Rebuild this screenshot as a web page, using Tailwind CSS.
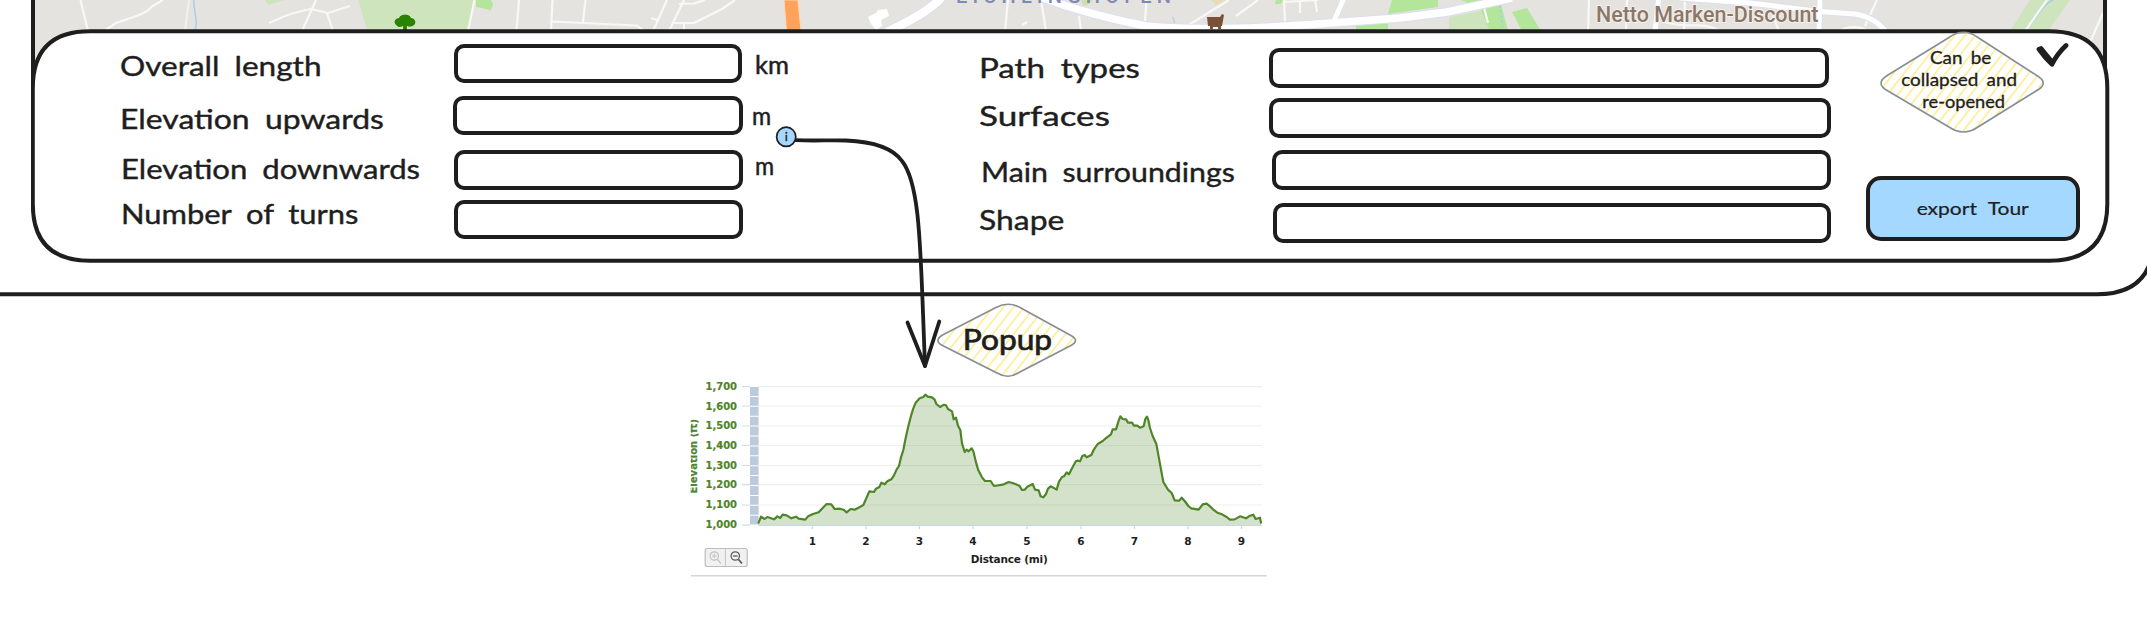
<!DOCTYPE html>
<html lang="en">
<head>
<meta charset="utf-8">
<title>Tour details</title>
<script src="https://cdn.jsdelivr.net/npm/@tailwindcss/browser@4"></script>
</head>
<body class="bg-white">
<main class="relative flex h-[623px] w-[2147px] flex-col overflow-hidden bg-white font-['Lato',sans-serif] text-[#1e1e1e]">

  <!-- map strip, continues under the rounded panel corners -->
  <div class="ml-[31px] h-[90px] w-[2076px] shrink-0 border-x-4 border-[#1e1e1e] bg-[#e5e3df]">
    <svg class="block h-[90px] w-[2068px]" viewBox="35 0 2068 90" fill="none">
      <g fill="#cde4bd">
        <path d="M265 0H284L268 5Z"/>
        <path d="M358 0H474.500L468 31H367.500Z"/>
        <path d="M1449 17L1485 10L1494 31H1449Z"/>
        <path d="M2030 0H2070L2048 31H2010Z"/>
      </g>
      <g fill="#b3e59a">
        <path d="M476 0H491L493 4L491 10.500L484 8.500L476 7Z"/>
        <path d="M1276 0H1283L1281 4H1275Z"/>
        <path d="M1392 0H1438V7L1388 14Z"/>
        <path d="M1356 25L1388 23V31H1356Z"/>
        <path d="M1461 0H1500L1508 31H1490L1480 8Z"/>
        <path d="M1512 12L1527 8L1541 31H1522Z"/>
        <path d="M1081 0H1093L1088 5L1083 6Z" fill="#cfe0ae"/>
      </g>
      <path d="M1211 0H1225L1216 5Z" fill="#e8dcb4"/>
      <g stroke="#a9cdea" stroke-width="1.500">
        <path d="M194 0C193 12 199 20 195 31"/>
        <path d="M1499 0L1503 31" stroke-dasharray="3 2"/>
        <path d="M2053 0C2040 6 2042 14 2026 28"/>
        <path d="M1173 17L1175 25" stroke="#c6cde8"/>
      </g>
      <g stroke="#f8f8f6" stroke-width="2.200" stroke-linejoin="round">
        <path d="M80.500 0L88 31M104 31L116 23C130 18 147 14 151 7L163 0"/>
        <path d="M189 0L185 31" stroke-opacity=".6"/>
        <path d="M269 23L276 20C290 13 300 11 311 9L328 13L350 6M316 0L302 31M327 13L333 31"/>
        <path d="M474.500 0L468 31M519 0L516.500 31M552.500 0L551 31M551 21.500L637 25.500L644 31M585.500 0L583 22M566 -1H601"/>
        <path d="M667 0L653 31M684 0L669 31M679 4L694 3.500L705 0M673 23H694L722 9L735 0M684 23V31M651 18L657 20"/>
        <path d="M1008 0L1005 31M1041 0L1046 31M1079 16L1081 31M1146.500 0L1145 21M1187 26L1229 0M1236 16L1258 0M1022 25L1027 22"/>
        <path d="M1284 0L1285 21M1284 2L1318 0M1300 0V13M1315 0L1317 12"/>
        <path d="M1482 0L1488 23M1589 0L1588 31M1627 0L1626 31M1685 0L1684 31M1773 16L1779 31M1877 0L1865 26M2047 0L2025 31M2103 13L2083 58"/>
        <path d="M1665 22C1690 30 1700 20 1720 31M1840 31C1846 26 1860 26 1866 30"/>
      </g>
      <g stroke="#dcdff0" stroke-linejoin="round">
        <path d="M942 -3C930 10 912 20 887 32" stroke-width="10.500"/>
        <path d="M1040 -3C1070 8 1100 17 1146 26C1200 31 1260 28 1303 25L1400 18L1447 12L1512 -2" stroke-width="9.500"/>
        <path d="M1344 -2L1334 21M1658.500 0L1655 31M1820 0L1819 31M1680 -2L1750 3L1820 11.500L1855 14C1872 17 1880 24 1888 34" stroke-width="7"/>
      </g>
      <g stroke="#fff" stroke-linejoin="round">
        <path d="M942 -3C930 10 912 20 887 32" stroke-width="8.500"/>
        <path d="M1040 -3C1070 8 1100 17 1146 26C1200 31 1260 28 1303 25L1400 18L1447 12L1512 -2" stroke-width="7.500"/>
        <path d="M1344 -2L1334 21M1658.500 0L1655 31M1820 0L1819 31M1680 -2L1750 3L1820 11.500L1855 14C1872 17 1880 24 1888 34" stroke-width="5"/>
      </g>
      <path d="M868 17L876 13L878 10L887 9L889 16L881 20L882 26L876 30L871 24Z" fill="#fff"/>
      <path d="M784 0H798L801 31H786.500Z" fill="#ffa35c" stroke="#fbd9bd"/>
      <!-- tree -->
      <path d="M396 25C393 22 395 18 399 18C400 14 409 13 411 18C415 18 417 23 414 25C412 27 409 27 407 26L407 31H403V26C400 28 398 27 396 25Z" fill="#2a8400" stroke="#e6f2dd" stroke-width="1" paint-order="stroke"/>
      <!-- cart -->
      <path d="M1207 17H1220L1222 14L1224 15L1222 26H1221V29H1218V27H1213V29H1210V26H1208Z" fill="#7a5138"/>
      <text x="956" y="3.300" textLength="215" font-family="Roboto, sans-serif" font-weight="500" font-size="20" fill="#7f88b3">EICHLINGHOFEN</text>
      <text x="1596" y="21.700" textLength="222.500" lengthAdjust="spacingAndGlyphs" font-family="Roboto, sans-serif" font-weight="500" font-size="22.500" fill="#8c7767" stroke="#f4f1ee" stroke-width="2" paint-order="stroke">Netto Marken-Discount</text>
    </svg>
  </div>

  <!-- collapsible details panel -->
  <section class="relative -mt-[61px] ml-[31px] flex h-[234px] w-[2079px] shrink-0 pl-[90px]">
    <svg class="absolute inset-0 h-full w-full" viewBox="31 29 2079 234">
      <path d="M90 31.300H2049Q2107.300 31.300 2107.300 88V204Q2107.300 260.700 2049 260.700H90Q32.800 260.700 32.800 204V88Q32.800 31.300 90 31.300Z" fill="#fff" stroke="#1e1e1e" stroke-width="4"/>
    </svg>

    <div class="relative -ml-px flex w-[332px] flex-col whitespace-nowrap text-[27px] leading-8 [word-spacing:6px] [-webkit-text-stroke:0.4px_#1e1e1e] *:origin-left">
      <div class="mt-[21px] scale-x-[1.168]">Overall length</div>
      <div class="mt-[20.600px] scale-x-[1.182]">Elevation upwards</div>
      <div class="mt-[18px] ml-px scale-x-[1.152]">Elevation downwards</div>
      <div class="mt-[13px] ml-px scale-x-[1.145]">Number of turns</div>
    </div>

    <div class="relative flex w-[291px] flex-col *:rounded-[10px] *:border-4 *:border-[#1e1e1e] *:bg-white">
      <div class="mt-[15px] ml-[2px] h-[39px] w-[288px]"></div>
      <div class="mt-[13px] ml-[1px] h-[39px] w-[290px]"></div>
      <div class="mt-[15px] ml-[2px] h-[40px] w-[289px]"></div>
      <div class="mt-[10px] ml-[2px] h-[39px] w-[289px]"></div>
    </div>

    <div class="relative flex w-[236px] flex-col text-[25px] leading-8 [-webkit-text-stroke:0.5px_#1e1e1e] *:origin-left">
      <div class="mt-[19.300px] ml-[12px] scale-x-[1.020]">km</div>
      <div class="mt-[18.700px] ml-[9px] scale-x-[0.930]">m</div>
      <div class="mt-[18px] ml-[12px] scale-x-[0.930]">m</div>
    </div>

    <div class="relative flex w-[290px] flex-col whitespace-nowrap text-[27px] leading-8 [word-spacing:6px] [-webkit-text-stroke:0.4px_#1e1e1e] *:origin-left">
      <div class="mt-[23px] scale-x-[1.225]">Path types</div>
      <div class="mt-4 scale-x-[1.300]">Surfaces</div>
      <div class="mt-[23.700px] ml-[2px] scale-x-[1.122]">Main surroundings</div>
      <div class="mt-4 scale-x-[1.180]">Shape</div>
    </div>

    <div class="relative flex w-[597px] flex-col *:h-10 *:rounded-[10px] *:border-4 *:border-[#1e1e1e] *:bg-white">
      <div class="mt-[19px] w-[560px]"></div>
      <div class="mt-[10px] w-[562px]"></div>
      <div class="mt-[12px] ml-[3px] w-[559px]"></div>
      <div class="mt-[13px] ml-[4px] w-[558px]"></div>
    </div>

    <div class="relative flex w-[214px] flex-col">
      <div class="flex h-[104px] pt-[2px] pl-[14px]">
        <div class="relative h-[102px] w-[165px] shrink-0">
          <svg class="absolute inset-0" width="165" height="102" viewBox="1880 31 165 102">
            <defs>
              <pattern id="hatch" width="8.200" height="8.200" patternUnits="userSpaceOnUse" patternTransform="rotate(38)">
                <path d="M4 0V8.200" stroke="#ffe97f" stroke-width="1.400"/>
              </pattern>
            </defs>
            <path d="M1949 37.500Q1963.500 27 1978 37.500L2036 75Q2050.500 83.300 2036 91L1978 127Q1963.500 137 1949 127L1888 91Q1874 83.300 1888 75Z" fill="url(#hatch)" stroke="#868e96" stroke-width="1.600"/>
          </svg>
          <div class="relative flex flex-col items-center pt-[15.500px] pr-[7px] text-center text-[17px] leading-[22.300px] whitespace-nowrap [word-spacing:3px] [-webkit-text-stroke:0.3px_#1e1e1e]">
            <div class="ml-[3px] scale-x-[1.110]">Can be</div>
            <div class="scale-x-[1.110]">collapsed and</div>
            <div class="ml-[9px] scale-x-[1.070]">re-opened</div>
          </div>
        </div>
        <svg class="mt-[9px] -ml-[11px] shrink-0" width="35" height="30" viewBox="2034 40 35 30" fill="none" stroke="#1e1e1e" stroke-width="4.800" stroke-linecap="round" stroke-linejoin="round">
          <path d="M2039 49.200Q2045 58 2052 64.300Q2057 54 2066 45.500M2041 48.500L2052 62"/>
        </svg>
      </div>
      <button class="mt-[43px] flex h-[65px] w-[214px] items-center justify-center rounded-[15px] border-4 border-[#1e1e1e] bg-[#a5d8ff] pt-[1px] text-[17.500px] [word-spacing:5px] [-webkit-text-stroke:0.2px_#1e1e1e]"><span class="scale-x-[1.200]">export Tour</span></button>
    </div>
  </section>

  <!-- popup annotation -->
  <div class="relative mt-[40px] ml-[937px] flex h-[75px] w-[140px] shrink-0 items-center justify-center">
    <svg class="absolute inset-0" width="140" height="75" viewBox="937 303 140 75">
      <path d="M996 307.500Q1008.300 301 1020 307.500L1070 335Q1081 340.500 1070 346L1018 373Q1008.300 379.500 997 373L942.500 345.500Q933.500 340.500 942.500 335Z" fill="url(#hatch)" stroke="#868e96" stroke-width="1.700"/>
    </svg>
    <span class="relative -mt-[3px] scale-x-[1.130] text-[28px] leading-8 [-webkit-text-stroke:0.7px_#1e1e1e]">Popup</span>
  </div>

  <!-- elevation profile -->
  <svg class="mt-[2px] ml-[690px] shrink-0" width="580" height="200" viewBox="690 380 580 200" fill="none" font-family="'DejaVu Sans', sans-serif" font-weight="700">
    <path d="M758 386.700H1262M758 406H1262M758 426H1262M758 445.500H1262M758 465.500H1262M758 484.700H1262M758 505H1262" stroke="#eeefee" stroke-width="1.200"/>
    <path d="M742 386.700H750M742 406H750M742 426H750M742 445.500H750M742 465.500H750M742 484.700H750M742 505H750M742 525.200H750" stroke="#cfdde6" stroke-width="1.200"/>
    <path d="M754.300 387V525" stroke="#bccbdb" stroke-width="8.600" stroke-dasharray="8.900 1"/>
    <g transform="translate(680 290) scale(.33333)" stroke-linejoin="round">
      <path fill="#4d8527" fill-opacity=".24" d="M236 705L236 698L243 680L254 687L262 681L282 688L292 679L301 684L308 674L320 676L334 685L348 680L356 686L376 689L384 679L399 672L416 667L428 654L440 642L454 643L464 657L480 656L492 660L500 667L512 657L524 659L538 652L550 645L558 627L568 604L582 606L588 596L598 591L604 578L614 583L622 574L634 568L642 556L650 538L657 528L663 502L670 480L677 444L686 404L694 374L700 355L707 338L719 325L730 321L736 314L743 320L756 322L764 329L769 342L780 351L792 344L798 346L804 357L816 364L821 388L828 383L834 407L841 420L846 460L854 486L860 479L866 484L875 475L880 484L888 517L895 541L906 562L915 573L932 573L942 588L968 584L986 576L1000 580L1018 587L1026 600L1034 599L1042 590L1058 582L1065 599L1076 601L1082 619L1090 622L1098 612L1104 596L1112 589L1120 593L1130 599L1137 575L1146 561L1152 559L1160 547L1167 553L1176 535L1188 513L1194 512L1200 514L1207 498L1214 495L1220 502L1234 495L1242 478L1253 462L1268 453L1280 443L1293 433L1298 418L1308 418L1316 392L1321 379L1328 387L1338 388L1344 398L1356 398L1362 407L1372 407L1380 413L1391 409L1396 387L1401 380L1405 390L1410 414L1418 438L1429 462L1436 500L1445 549L1450 576L1464 599L1475 609L1484 631L1498 632L1505 623L1514 633L1525 648L1534 655L1556 659L1568 643L1580 641L1590 649L1600 659L1612 668L1626 673L1640 681L1650 689L1664 688L1680 679L1698 685L1710 677L1720 674L1727 687L1740 683L1743 698V705Z"/>
      <path stroke="#4d8527" stroke-width="6.500" stroke-linecap="round" d="M236 698L243 680L254 687L262 681L282 688L292 679L301 684L308 674L320 676L334 685L348 680L356 686L376 689L384 679L399 672L416 667L428 654L440 642L454 643L464 657L480 656L492 660L500 667L512 657L524 659L538 652L550 645L558 627L568 604L582 606L588 596L598 591L604 578L614 583L622 574L634 568L642 556L650 538L657 528L663 502L670 480L677 444L686 404L694 374L700 355L707 338L719 325L730 321L736 314L743 320L756 322L764 329L769 342L780 351L792 344L798 346L804 357L816 364L821 388L828 383L834 407L841 420L846 460L854 486L860 479L866 484L875 475L880 484L888 517L895 541L906 562L915 573L932 573L942 588L968 584L986 576L1000 580L1018 587L1026 600L1034 599L1042 590L1058 582L1065 599L1076 601L1082 619L1090 622L1098 612L1104 596L1112 589L1120 593L1130 599L1137 575L1146 561L1152 559L1160 547L1167 553L1176 535L1188 513L1194 512L1200 514L1207 498L1214 495L1220 502L1234 495L1242 478L1253 462L1268 453L1280 443L1293 433L1298 418L1308 418L1316 392L1321 379L1328 387L1338 388L1344 398L1356 398L1362 407L1372 407L1380 413L1391 409L1396 387L1401 380L1405 390L1410 414L1418 438L1429 462L1436 500L1445 549L1450 576L1464 599L1475 609L1484 631L1498 632L1505 623L1514 633L1525 648L1534 655L1556 659L1568 643L1580 641L1590 649L1600 659L1612 668L1626 673L1640 681L1650 689L1664 688L1680 679L1698 685L1710 677L1720 674L1727 687L1740 683L1743 698"/>
    </g>
    <path d="M758 525.300H1262M812.300 525V529M866 525V529M919.500 525V529M973 525V529M1027 525V529M1081 525V529M1134.500 525V529M1188 525V529M1241.500 525V529" stroke="#c9d9e4" stroke-width="1.200"/>
    <g fill="#4d8527" font-size="11" stroke="#4d8527" stroke-width=".2">
      <text x="705.500" y="389.800" textLength="31.500" lengthAdjust="spacingAndGlyphs">1,700</text>
      <text x="705.500" y="409.800" textLength="31.500" lengthAdjust="spacingAndGlyphs">1,600</text>
      <text x="705.500" y="429.300" textLength="31.500" lengthAdjust="spacingAndGlyphs">1,500</text>
      <text x="705.500" y="449.300" textLength="31.500" lengthAdjust="spacingAndGlyphs">1,400</text>
      <text x="705.500" y="468.600" textLength="31.500" lengthAdjust="spacingAndGlyphs">1,300</text>
      <text x="705.500" y="488.300" textLength="31.500" lengthAdjust="spacingAndGlyphs">1,200</text>
      <text x="705.500" y="508" textLength="31.500" lengthAdjust="spacingAndGlyphs">1,100</text>
      <text x="705.500" y="528" textLength="31.500" lengthAdjust="spacingAndGlyphs">1,000</text>
      <svg x="690.700" y="410" width="12" height="90" viewBox="690.700 410 12 90">
        <text transform="translate(697 493.500) rotate(-90)" textLength="74.500" lengthAdjust="spacingAndGlyphs">Elevation (ft)</text>
      </svg>
    </g>
    <g fill="#1e1e1e" font-size="10.500" text-anchor="middle">
      <text x="812.500" y="545">1</text><text x="866" y="545">2</text><text x="919.500" y="545">3</text>
      <text x="973" y="545">4</text><text x="1027" y="545">5</text><text x="1081" y="545">6</text>
      <text x="1134.500" y="545">7</text><text x="1188" y="545">8</text><text x="1241.500" y="545">9</text>
      <text x="1009.300" y="562.800" textLength="77">Distance (mi)</text>
    </g>
    <rect x="705.200" y="548.500" width="42" height="18" rx="2" fill="#f1f1f1" stroke="#bdbdbd" stroke-width="1.200"/>
    <path d="M725.400 549V566" stroke="#c4c4c4"/>
    <g stroke="#c2c2c2" stroke-width="1.200"><circle cx="714.300" cy="556" r="4.200"/><path d="M712 556H716.600M714.300 553.700V558.300M717.500 559.500L721 563.500"/></g>
    <g stroke="#5a5a5a" stroke-width="1.300"><circle cx="735.300" cy="556" r="4.200"/><path d="M733 556H737.600"/><path d="M738.500 559.500L742 563.500" stroke-width="1.800"/></g>
    <path d="M691 575.700H1267" stroke="#d6d6d6" stroke-width="1.600"/>
  </svg>

  <!-- window frame, info badge and connector drawn over the canvas -->
  <svg class="pointer-events-none absolute inset-0" width="2147" height="623" viewBox="0 0 2147 623" fill="none" stroke="#1e1e1e" stroke-width="4" stroke-linecap="round" stroke-linejoin="round">
    <path d="M-4 294.300H2097Q2154 294.300 2154 237"/>
    <path d="M796 140.200C815 141 830 140 846 140.500C870 141.500 892 147 902 161C918 181 920 235 922.500 300L925 366" stroke-width="3.800"/>
    <path d="M907.500 322.500L925 366L939.300 321.500" stroke-width="3.800"/>
    <circle cx="786.200" cy="136.800" r="9.600" fill="#a5d8ff" stroke-width="1.700"/>
    <text x="786.400" y="140.500" text-anchor="middle" font-family="Lato, sans-serif" font-size="11" fill="#1e1e1e" stroke="#1e1e1e" stroke-width=".5">i</text>
  </svg>
</main>
</body>
</html>
